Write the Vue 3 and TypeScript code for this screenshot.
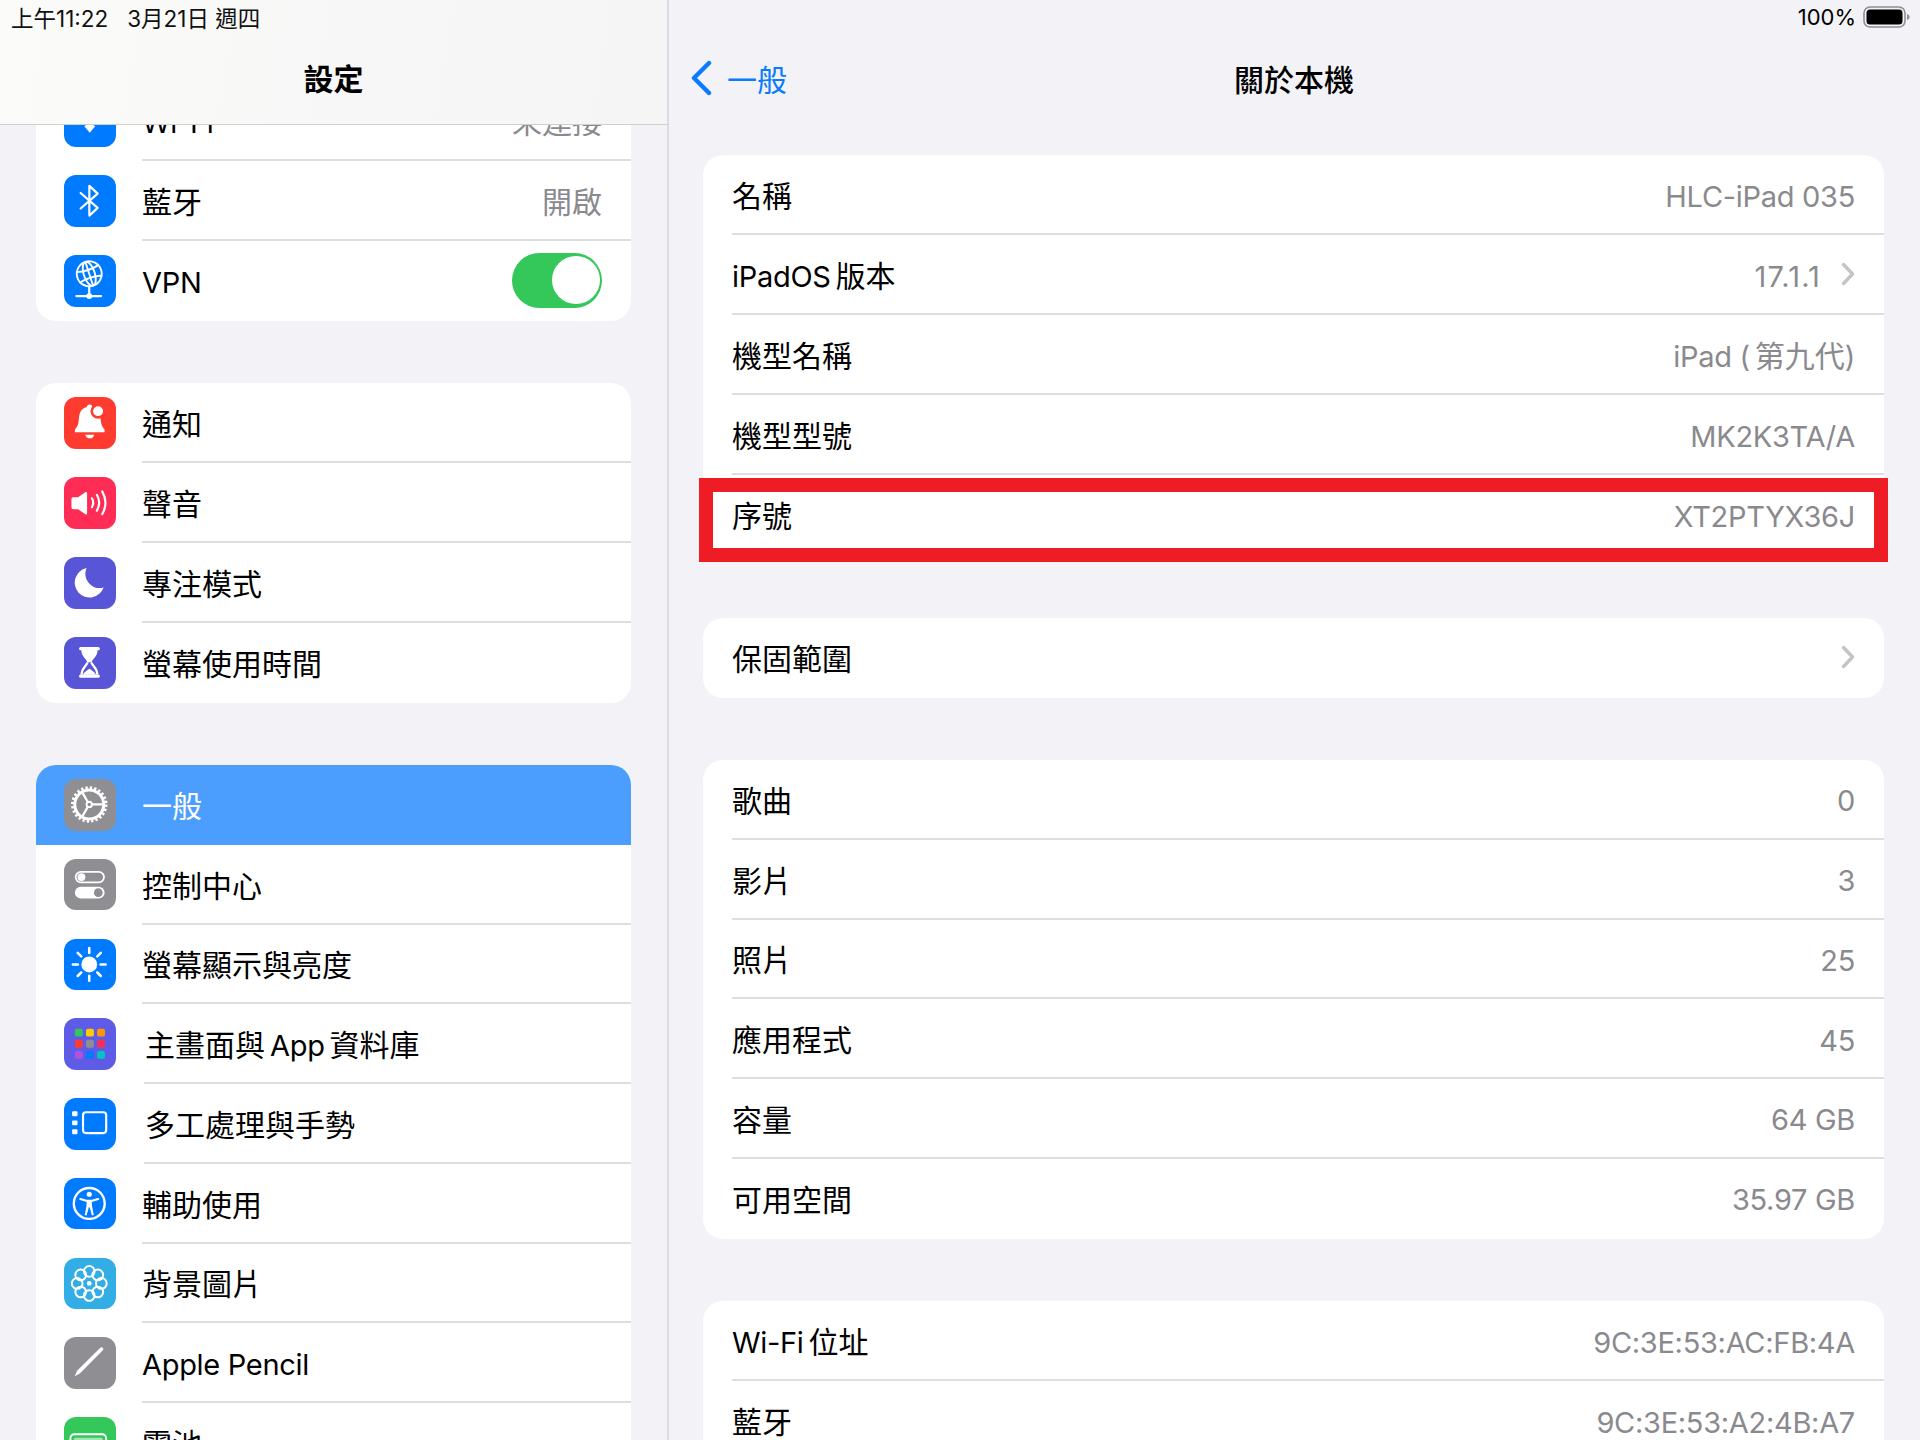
<template>
  <div class="ipad">
    <aside class="sidebar">
      <header class="side-head">
        <div class="status">上午11:22&nbsp;&nbsp; 3月21日 週四</div>
        <div class="side-title">設定</div>
      </header>
      <div class="side-list">
        <section v-for="(group, g) in sideGroups" :key="g" class="card">
          <div
            v-for="item in group"
            :key="item.label"
            class="side-row"
            :class="{ active: item.active, nudge: item.nudge }"
          >
            <svg class="icon" viewBox="0 0 52 52" :style="{ background: item.color }" v-html="icons[item.icon]"></svg>
            <div class="row-body">
              <span class="label" :class="{ 'only-latin': onlyLatin(item.label) }">
                <span v-for="(s, i) in segments(item.label)" :key="i" :class="{ latin: s.latin }">{{ s.text }}</span>
              </span>
              <span v-if="item.value" class="value">{{ item.value }}</span>
              <span v-if="item.toggle" class="switch"><i></i></span>
            </div>
          </div>
        </section>
      </div>
    </aside>

    <main class="detail">
      <div class="status status-right">
        100%
        <svg class="battery" viewBox="0 0 48 22" width="48" height="22">
          <rect x="1" y="1" width="41" height="20" rx="6" fill="none" stroke="#8e8e93" stroke-width="1.6" />
          <rect x="3.5" y="3.5" width="36" height="15" rx="3.5" fill="#000" />
          <path d="M44 8c1.8.5 2.6 1.6 2.6 3s-.8 2.5-2.6 3z" fill="#8e8e93" />
        </svg>
      </div>
      <nav class="detail-nav">
        <span class="back">
          <svg viewBox="0 0 24 36" width="24" height="36">
            <path d="M20 3 5 18l15 15" fill="none" stroke="#0a7aff" stroke-width="4.4" stroke-linecap="round" stroke-linejoin="round" />
          </svg>
          一般
        </span>
        <span class="detail-title">關於本機</span>
      </nav>
      <div class="detail-list">
        <section v-for="(group, g) in detailGroups" :key="g" class="card">
          <div v-for="item in group" :key="item.label" class="detail-row">
            <div class="row-body">
              <span class="label" :class="{ 'only-latin': onlyLatin(item.label) }">
                <span v-for="(s, i) in segments(item.label)" :key="i" :class="{ latin: s.latin }">{{ s.text }}</span>
              </span>
              <span v-if="item.value" class="value" :class="{ 'only-latin': onlyLatin(item.value), spaced: item.spaced }">
                <span v-for="(s, i) in segments(item.value)" :key="i" :class="{ latin: s.latin }">{{ s.text }}</span>
              </span>
              <svg v-if="item.more" class="chev" viewBox="0 0 14 24" width="14" height="24">
                <path d="M2.5 2.5 11.5 12l-9 9.5" fill="none" stroke="#c4c4c7" stroke-width="3.4" stroke-linecap="round" stroke-linejoin="round" />
              </svg>
            </div>
            <div v-if="item.mark" class="mark"></div>
          </div>
        </section>
      </div>
    </main>
  </div>
</template>

<script setup lang="ts">
interface SideItem {
  label: string;
  icon: string;
  color: string;
  value?: string;
  toggle?: boolean;
  active?: boolean;
  nudge?: boolean;
}

interface DetailItem {
  label: string;
  value?: string;
  more?: boolean;
  mark?: boolean;
  spaced?: boolean;
}

const blue = "#007aff";
const gray = "#8e8e93";
const indigo = "#5856d6";

// latin runs get their own span, Inter is a bit wider than the system font
const onlyLatin = (text: string) => /^[\x20-\x7e\u2009]+$/.test(text);
const segments = (text: string) =>
  (text.match(/[\x20-\x7e\u2009]+|[^\x20-\x7e\u2009]+/g) ?? []).map((part) => ({
    text: part,
    latin: onlyLatin(part),
  }));

const rays = [0, 45, 90, 135, 180, 225, 270, 315]
  .map((a) => `<path d="M25.5 14.2V9.2" transform="rotate(${a} 25.5 25.7)" stroke="#fff" stroke-width="2.6" stroke-linecap="round"/>`)
  .join("");

const petals = [0, 45, 90, 135, 180, 225, 270, 315]
  .map((a) => `<circle cx="25.5" cy="13.5" r="5.4" transform="rotate(${a} 25.5 25.7)" fill="none" stroke="#fff" stroke-width="2"/>`)
  .join("");

const gridColors = ["#34c759", "#ffcc00", "#ff9500", "#ff3b30", "#8e8e93", "#ff2d55", "#af52de", "#007aff", "#00c7be"];
const gridCells = gridColors
  .map((c, i) => `<rect x="${11 + (i % 3) * 11.2}" y="${10.8 + Math.floor(i / 3) * 11.2}" width="8" height="8" rx="2" fill="${c}"/>`)
  .join("");

const icons: Record<string, string> = {
  wifi: `<path d="M26 38 20.5 31.5a8 8 0 0 1 11 0z" fill="#fff"/><path d="M16 27a14 14 0 0 1 20 0M11 21a21 21 0 0 1 30 0" fill="none" stroke="#fff" stroke-width="3.4"/>`,
  bluetooth: `<path d="M16.8 18.2 34 33.2 25.6 41V11L34 18.8 16.8 33.8" fill="none" stroke="#fff" stroke-width="2.2" stroke-linejoin="round" stroke-linecap="round"/>`,
  globe: `<g fill="none" stroke="#fff" stroke-width="1.9" transform="rotate(-18 25.5 19)"><circle cx="25.5" cy="19" r="12.6"/><ellipse cx="25.5" cy="19" rx="5.6" ry="12.6"/><path d="M25.5 6.4v25.2M14 13.5q11.5 3 23 0M14 24.5q11.5-3 23 0"/></g><path d="M25.5 32v9.5M12.5 41.5h25" stroke="#fff" stroke-width="2.2" stroke-linecap="round"/><circle cx="25.5" cy="41.5" r="3" fill="#fff"/>`,
  bell: `<path d="M25.8 7.5c-1.6 0-2.7 1-2.8 2.5C17.2 11.5 15.4 16 15 22c-.4 5.4-1.2 8-4 10.8V35.5h30V32.8c-2.8-2.8-3.6-5.4-4-10.8-.4-6-2.2-10.5-8.2-12-.1-1.5-1.4-2.5-3-2.5z" fill="#fff"/><circle cx="34.4" cy="14.3" r="7.6" fill="#ff3b30"/><circle cx="34.4" cy="14.3" r="5" fill="#fff"/><path d="M21.5 38h9c-.5 2.4-2.3 3.7-4.5 3.7s-4-1.3-4.5-3.7z" fill="#fff"/>`,
  sound: `<path d="M9.5 20.5h4.8l7.2-5.2c.9-.6 1.8-.2 1.8 1v20.4c0 1.2-.9 1.6-1.8 1l-7.2-5.2H9.5c-1.3 0-2-.7-2-2v-8c0-1.3.7-2 2-2z" fill="#fff"/><g fill="none" stroke="#fff" stroke-width="2.2" stroke-linecap="round"><path d="M28.2 21.5c1.8 3 1.8 6 0 9"/><path d="M33.2 18c3 5.2 3 10.8 0 16"/><path d="M38.6 14.5c4.2 7.4 4.2 15.6 0 23"/></g>`,
  moon: `<path d="M22.8 11.2A15 15 0 1 0 40 30.8 14.5 14.5 0 0 1 22.8 11.2z" fill="#fff"/>`,
  hourglass: `<g fill="#fff"><rect x="15.2" y="10" width="21" height="3.4" rx="1.6"/><rect x="15.2" y="37.8" width="21" height="3.4" rx="1.6"/><path d="M17.5 13h16.4c0 6.6-5 8.8-6.2 12.6h-4c-1.2-3.8-6.2-6-6.2-12.6z"/><path d="M19 38.2c1-2.6 4.4-4.6 6.7-6.2 2.3 1.6 5.7 3.6 6.7 6.2z"/></g><path d="M17.7 38c0-6.6 5-8.8 6.2-12.4M33.7 38c0-6.6-5-8.8-6.2-12.4" fill="none" stroke="#fff" stroke-width="2.2"/>`,
  gear: `<g fill="none" stroke="#fff"><circle cx="25.5" cy="25.7" r="14.6" stroke-width="3"/><circle cx="25.5" cy="25.7" r="16.6" stroke-width="3.6" stroke-dasharray="2.3 2.046"/><path d="M28 25.7H39M24.2 23.5 18.7 14M24.2 27.9 18.7 37.4" stroke-width="2.3"/><circle cx="25.5" cy="25.7" r="2.7" stroke-width="1.9"/></g>`,
  toggles: `<rect x="11.8" y="13" width="28.6" height="10.6" rx="5.3" fill="none" stroke="#fff" stroke-width="1.8"/><circle cx="17.6" cy="18.3" r="4" fill="#fff"/><rect x="11" y="28" width="30" height="12" rx="6" fill="#fff"/><circle cx="34.6" cy="34" r="4.4" fill="#8e8e93"/>`,
  sun: `<circle cx="25.5" cy="25.7" r="8" fill="#fff"/>${rays}`,
  grid: gridCells,
  multitask: `<g fill="#fff"><rect x="8.2" y="13.4" width="5.4" height="5" rx="1"/><rect x="8.2" y="22.6" width="5.4" height="5" rx="1"/><rect x="8.2" y="31.6" width="5.4" height="5" rx="1"/></g><rect x="19.2" y="14.4" width="23.4" height="21" rx="3" fill="none" stroke="#fff" stroke-width="2.2"/>`,
  access: `<circle cx="25.5" cy="25.7" r="15.6" fill="none" stroke="#fff" stroke-width="2.4"/><circle cx="25.5" cy="16.4" r="2.6" fill="#fff"/><path d="M16.5 21.2l6 1.8h6l6-1.8" fill="none" stroke="#fff" stroke-width="2.2" stroke-linecap="round" stroke-linejoin="round"/><path d="M23 22.5h5l.4 6.5 1.7 8.3-1.9.5-2.3-8.3h-.8l-2.3 8.3-1.9-.5 1.7-8.3z" fill="#fff"/>`,
  flower: `${petals}<circle cx="25.5" cy="25.7" r="2.4" fill="#fff"/>`,
  pencil: `<path d="M10.8 39.6 13.2 34.2 36.4 11.1c.9-.9 2.1-.9 2.8-.2s.7 1.9-.2 2.8L16 36.8z" fill="#fff"/>`,
  battery: `<rect x="6.5" y="17.5" width="36" height="19" rx="4" fill="none" stroke="#fff" stroke-width="2"/><rect x="10" y="21" width="29" height="12" rx="1.5" fill="#fff" opacity=".55"/>`,
};

const sideGroups: SideItem[][] = [
  [
    { label: "Wi-Fi", icon: "wifi", color: blue, value: "未連接" },
    { label: "藍牙", icon: "bluetooth", color: blue, value: "開啟" },
    { label: "VPN", icon: "globe", color: blue, toggle: true },
  ],
  [
    { label: "通知", icon: "bell", color: "#ff3b30" },
    { label: "聲音", icon: "sound", color: "#ff2d55" },
    { label: "專注模式", icon: "moon", color: indigo },
    { label: "螢幕使用時間", icon: "hourglass", color: indigo },
  ],
  [
    { label: "一般", icon: "gear", color: gray, active: true },
    { label: "控制中心", icon: "toggles", color: gray },
    { label: "螢幕顯示與亮度", icon: "sun", color: blue },
    { label: "主畫面與\u2009App\u2009資料庫", icon: "grid", color: "#5e5ce6", nudge: true },
    { label: "多工處理與手勢", icon: "multitask", color: blue, nudge: true },
    { label: "輔助使用", icon: "access", color: blue },
    { label: "背景圖片", icon: "flower", color: "#32ade6" },
    { label: "Apple Pencil", icon: "pencil", color: gray },
    { label: "電池", icon: "battery", color: "#34c759" },
  ],
];

const detailGroups: DetailItem[][] = [
  [
    { label: "名稱", value: "HLC-iPad 035" },
    { label: "iPadOS\u2009版本", value: "17.1.1", more: true, spaced: true },
    { label: "機型名稱", value: "iPad (\u2009第九代)" },
    { label: "機型型號", value: "MK2K3TA/A" },
    { label: "序號", value: "XT2PTYX36J", mark: true },
  ],
  [{ label: "保固範圍", more: true }],
  [
    { label: "歌曲", value: "0" },
    { label: "影片", value: "3" },
    { label: "照片", value: "25" },
    { label: "應用程式", value: "45" },
    { label: "容量", value: "64 GB" },
    { label: "可用空間", value: "35.97 GB" },
  ],
  [
    { label: "Wi-Fi\u2009位址", value: "9C:3E:53:AC:FB:4A" },
    { label: "藍牙", value: "9C:3E:53:A2:4B:A7" },
  ],
];
</script>

<style>
html,
body {
  margin: 0;
  background: #f2f2f7;
}
</style>

<style scoped>
.ipad {
  display: flex;
  width: 1920px;
  height: 1440px;
  overflow: hidden;
  background: #f2f2f7;
  color: #000;
  font-family: Inter, "Noto Sans CJK TC", sans-serif;
  font-size: 30px;
}
.sidebar {
  position: relative;
  width: 667px;
  flex: none;
  border-right: 2px solid #dcdce0;
  overflow: hidden;
}
.side-head {
  position: absolute;
  top: 0;
  left: 0;
  right: 0;
  height: 124px;
  z-index: 2;
  background: linear-gradient(100deg, #fbfbf9, #f7f7f7 55%, #f5f5f6);
  border-bottom: 1.5px solid #cfcfd2;
}
.status {
  height: 34px;
  display: flex;
  align-items: center;
  font-size: 22.5px;
  padding-left: 11px;
  color: #111;
}
.side-title {
  height: 86px;
  display: flex;
  align-items: center;
  justify-content: center;
  font-weight: 600;
}
.side-list {
  padding: 81px 36px 0 36px;
  display: flex;
  flex-direction: column;
  gap: 62px;
}
.card {
  background: #fff;
  border-radius: 20px;
}
.side-row {
  height: 80px;
  display: flex;
  align-items: center;
  padding-left: 28px;
  gap: 26.5px;
}
.card:last-child .side-row {
  height: 79.75px;
}
.side-row:first-child {
  border-radius: 20px 20px 0 0;
}
.side-row.active {
  background: #4b9efe;
  color: #fff;
}
.side-row.active .row-body {
  border-bottom-color: transparent;
}
.side-row.nudge .row-body {
  margin-left: 2px;
}
.side-row.nudge .label {
  padding-left: 1px;
}
.icon {
  width: 51.5px;
  height: 51.5px;
  flex: none;
  border-radius: 12px;
}
.row-body {
  flex: 1;
  min-width: 0;
  height: 100%;
  box-sizing: border-box;
  display: flex;
  align-items: center;
  border-bottom: 2px solid #dedee2;
  padding-right: 29px;
}
.side-row:last-child .row-body,
.detail-row:last-child .row-body {
  border-bottom-color: transparent;
}
.label {
  flex: 1;
}
.value {
  color: #8a8a8e;
}
.latin {
  font-size: 29px;
  letter-spacing: -0.3px;
}
.spaced .latin {
  letter-spacing: 1.1px;
}
.only-latin {
  padding-top: 3px;
}
.switch {
  width: 90px;
  height: 55px;
  border-radius: 28px;
  background: #34c759;
  display: flex;
  align-items: center;
  justify-content: flex-end;
  padding-right: 2px;
  box-sizing: border-box;
}
.switch i {
  width: 48px;
  height: 48px;
  border-radius: 50%;
  background: #fff;
}
.detail {
  flex: 1;
  min-width: 0;
}
.status-right {
  justify-content: flex-end;
  padding: 0 9px 0 0;
  gap: 7px;
  color: #000;
  font-size: 22px;
}
.battery {
  flex: none;
}
.detail-nav {
  height: 88px;
  margin-bottom: 33px;
  display: flex;
  align-items: center;
  justify-content: center;
  position: relative;
}
.back {
  position: absolute;
  left: 20px;
  top: 0;
  bottom: 0;
  display: flex;
  align-items: center;
  gap: 14px;
  color: #0a7aff;
}
.detail-title {
  font-weight: 500;
  margin-left: -1px;
}
.detail-list {
  padding: 0 36px 0 34px;
  display: flex;
  flex-direction: column;
  gap: 62.5px;
}
.detail-row {
  position: relative;
  height: 80px;
  padding-left: 29px;
}
.card:nth-child(3) .detail-row {
  height: 79.75px;
}
.chev {
  margin-left: 20px;
  flex: none;
}
.mark {
  position: absolute;
  left: -4px;
  right: -4px;
  top: 3px;
  bottom: -7px;
  border: 14px solid #ee1c25;
}
</style>
